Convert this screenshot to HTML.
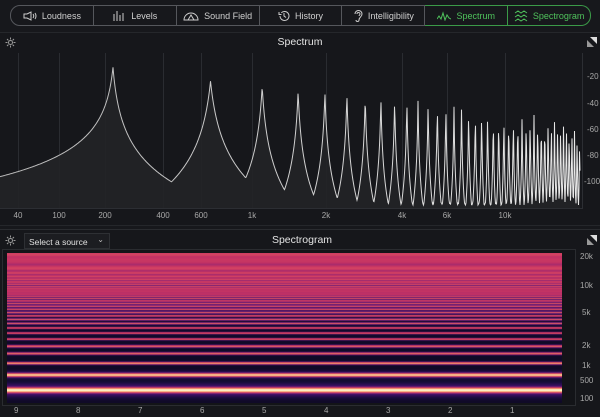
<!DOCTYPE html>
<html><head><meta charset="utf-8"><style>
*{margin:0;padding:0;box-sizing:border-box}
body{width:600px;height:417px;background:#17181c;overflow:hidden;font-family:"Liberation Sans",sans-serif;color:#d8d8d8;position:relative}
.tabs{position:absolute;left:10px;top:5px;width:581px;height:21px;display:flex}
.tab{flex:1;border:1px solid #55575c;border-left:none;display:flex;align-items:center;justify-content:center;font-size:9px;color:#d0d0d0;gap:5px}
.tab:first-child{border-left:1px solid #55575c;border-radius:10px 0 0 10px}
.tab.g{border-color:#3b9a48;color:#4fc25c}
.tab.g:last-child{border-radius:0 10px 10px 0}
svg{display:block}
.abs{position:absolute}
.lbl{position:absolute;font-size:8px;color:#a8a8a8}
</style></head><body>
<div class="tabs">
<div class="tab"><svg width="14" height="10" viewBox="0 0 14 10" fill="none" stroke="#ccc" stroke-width="1"><path d="M1 3h3l4-2v8L4 7H1z"/><path d="M10 3q1.5 2 0 4M12 2q2 3 0 6"/></svg>Loudness</div>
<div class="tab"><svg width="14" height="10" viewBox="0 0 14 10" stroke="#ccc" stroke-width="1"><path d="M2 3v7M5 0v10M8 4v6M11 2v8"/></svg>Levels</div>
<div class="tab"><svg width="16" height="10" viewBox="0 0 16 10" fill="none" stroke="#ccc" stroke-width="1"><path d="M1 9a7 7 0 0 1 14 0z"/><path d="M5 9l3-5 3 5"/></svg>Sound Field</div>
<div class="tab"><svg width="12" height="12" viewBox="0 0 12 12" fill="none" stroke="#ccc" stroke-width="1"><path d="M2 6a4.5 4.5 0 1 0 1.3-3.2"/><path d="M6 3v3l2 1.5"/><path d="M1 2v2.5h2.5" /></svg>History</div>
<div class="tab"><svg width="10" height="13" viewBox="0 0 10 13" fill="none" stroke="#ccc" stroke-width="1"><path d="M2 5a3.5 3.5 0 0 1 7 0c0 3-3 3-3 6a1.5 1.5 0 0 1-3 0"/><path d="M4 5a1.5 1.5 0 0 1 3 0c0 1-1 1.3-1 2"/></svg>Intelligibility</div>
<div class="tab g"><svg width="14" height="10" viewBox="0 0 14 10" fill="none" stroke="#4fc25c" stroke-width="1"><path d="M0 8l2-3 2 3 2-6 2 7 2-5 2 3 2 1"/></svg>Spectrum</div>
<div class="tab g"><svg width="14" height="12" viewBox="0 0 14 12" fill="none" stroke="#4fc25c" stroke-width="1"><path d="M1 3l3-2 3 2 3-2 3 2M1 7l3-2 3 2 3-2 3 2M1 11l3-2 3 2 3-2 3 2"/></svg>Spectrogram</div>
</div>

<div class="abs" style="left:0;top:32px;width:600px;height:194px;background:#16171b;border-top:1px solid #25272b;border-bottom:1px solid #25272b"></div>
<svg class="abs" style="left:5px;top:37px" width="11" height="11" viewBox="0 0 11 11" fill="none" stroke="#9a9a9a" stroke-width="1"><circle cx="5.5" cy="5.5" r="2"/><path d="M5.5 0.5v2M5.5 8.5v2M0.5 5.5h2M8.5 5.5h2M2 2l1.4 1.4M7.6 7.6L9 9M2 9l1.4-1.4M7.6 3.4L9 2"/></svg>
<div class="abs" style="left:0;width:600px;top:36px;text-align:center;font-size:10.5px;color:#e4e4e4">Spectrum</div>
<svg class="abs" style="left:587px;top:37px" width="10" height="10" viewBox="0 0 10 10"><path d="M3 0h7v7z" fill="#ddd"/><path d="M0 3v7h7z" fill="#999"/></svg>
<svg class="abs" id="sp" style="left:0;top:53px" width="582" height="156"></svg>
<div class="abs" style="left:0;top:208px;width:582px;height:1px;background:#2c2e33"></div>
<div class="abs" style="left:582px;top:53px;width:1px;height:156px;background:#2c2e33"></div>
<div class="lbl" style="left:587px;top:72px">-20</div>
<div class="lbl" style="left:587px;top:99px">-40</div>
<div class="lbl" style="left:587px;top:125px">-60</div>
<div class="lbl" style="left:587px;top:151px">-80</div>
<div class="lbl" style="left:584px;top:177px">-100</div>
<div id="xl"></div>

<div class="abs" style="left:0;top:229px;width:600px;height:188px;background:#16171b;border-top:1px solid #2a2c30"></div>
<svg class="abs" style="left:5px;top:235px" width="11" height="11" viewBox="0 0 11 11" fill="none" stroke="#9a9a9a" stroke-width="1"><circle cx="5.5" cy="5.5" r="2"/><path d="M5.5 0.5v2M5.5 8.5v2M0.5 5.5h2M8.5 5.5h2M2 2l1.4 1.4M7.6 7.6L9 9M2 9l1.4-1.4M7.6 3.4L9 2"/></svg>
<div class="abs" style="left:24px;top:233px;width:86px;height:16px;background:#1c1d21;border:1px solid #2e3034;font-size:8.5px;color:#e0e0e0;padding:3px 0 0 4px">Select a source<span style="position:absolute;right:5px;top:1px;font-size:8px;color:#bbb">&#8964;</span></div>
<div class="abs" style="left:0;width:604px;top:234px;text-align:center;font-size:10.5px;color:#e4e4e4">Spectrogram</div>
<svg class="abs" style="left:587px;top:235px" width="10" height="10" viewBox="0 0 10 10"><path d="M3 0h7v7z" fill="#ddd"/><path d="M0 3v7h7z" fill="#999"/></svg>
<div class="abs" style="left:2px;top:249px;width:574px;height:157px;border:1px solid #2a2c30;background:#131418"></div>
<canvas class="abs" id="sg" style="left:7px;top:253px" width="555" height="150"></canvas>
<div class="lbl" style="left:580px;top:252px">20k</div>
<div class="lbl" style="left:580px;top:281px">10k</div>
<div class="lbl" style="left:582px;top:308px">5k</div>
<div class="lbl" style="left:582px;top:341px">2k</div>
<div class="lbl" style="left:582px;top:361px">1k</div>
<div class="lbl" style="left:580px;top:376px">500</div>
<div class="lbl" style="left:580px;top:394px">100</div>
<div id="tl"></div>
<script>
(function(){
var fx=[[20,-20],[40,18],[100,59],[200,105],[400,163],[600,201],[1000,252],[2000,326],[4000,402],[6000,447],[10000,505],[20000,582],[24000,600]];
function interp(t,f){for(var i=0;i<t.length-1;i++){if(f<=t[i+1][0]){var a=t[i],b=t[i+1];var r=Math.log(f/a[0])/Math.log(b[0]/a[0]);return a[1]+r*(b[1]-a[1]);}}return t[t.length-1][1];}
var svgEl=document.getElementById('sp'),s='';
[40,100,200,400,600,1000,2000,4000,6000,10000].forEach(function(f){var x=Math.round(interp(fx,f))+0.5;s+='<line x1="'+x+'" y1="0" x2="'+x+'" y2="156" stroke="#2a2c31" stroke-width="1"/>';});
var xl='',names={40:'40',100:'100',200:'200',400:'400',600:'600',1000:'1k',2000:'2k',4000:'4k',6000:'6k',10000:'10k'};
for(var k in names){var x0=interp(fx,+k);xl+='<div class="lbl" style="left:'+(x0-8)+'px;width:16px;text-align:center;top:211px">'+names[k]+'</div>';}
document.getElementById('xl').innerHTML=xl;
var pk=[];for(var n=1;n*220<21000;n+=2){pk.push(interp(fx,n*220));}
function topY(x,i){if(i==0)return 67;if(i==1)return 81;if(i==2)return 86;if(i==3)return 91;if(x<540)return 92+(x-326)*0.09;if(x<570)return 111+(x-540)*0.3;return 120+(x-570)*1.2;}
var pts=[];
for(var x=0;x<=580;x+=0.5){var y=206;for(var i=0;i<pk.length;i++){var dx=x-pk[i];var spc=i==0?97:(pk[i]-pk[i-1]);var w=i==0?3:Math.max(0.25,spc*0.045);var c=(i==0&&dx<0)?30:(i==0?38:44);var yy=topY(pk[i],i)+c*Math.log(1+Math.abs(dx)/w);if(yy<y)y=yy;}
y=Math.min(y,204+Math.sin(x*3));pts.push([x,y-53]);}
var d='M0 156 ';pts.forEach(function(p){d+='L'+p[0].toFixed(1)+' '+p[1].toFixed(1)+' ';});
s+='<defs><linearGradient id="lg" x1="0" x2="1"><stop offset="0" stop-color="#b8b8b8"/><stop offset="1" stop-color="#e8e8e8"/></linearGradient></defs>';
s+='<path d="'+d+'L580 156Z" fill="#222327" opacity="0.9"/>';
var d2='M'+pts.map(function(p){return p[0].toFixed(1)+' '+p[1].toFixed(1)}).join(' L');
s+='<path d="'+d2+'" fill="none" stroke="url(#lg)" stroke-width="1"/>';
svgEl.innerHTML=s;
var tl='';for(var t=9;t>=1;t--){var tx=17+(9-t)*62;tl+='<div class="lbl" style="left:'+(tx-3)+'px;top:406px">'+t+'</div>';}
document.getElementById('tl').innerHTML=tl;
var fy=[[50,405],[100,399],[500,381],[1000,366],[2000,346],[5000,313],[10000,286],[20000,257],[24000,250]];
function yf(f){return interp(fy,f)-253;}
var mag=[[0,[10,8,26]],[0.15,[25,12,60]],[0.3,[70,15,110]],[0.45,[130,35,120]],[0.6,[195,50,100]],[0.72,[230,85,95]],[0.82,[250,140,100]],[0.92,[253,210,150]],[1,[252,253,210]]];
function cm(v){v=Math.max(0,Math.min(1,v));for(var i=0;i<mag.length-1;i++){if(v<=mag[i+1][0]){var a=mag[i],b=mag[i+1],r=(v-a[0])/(b[0]-a[0]);return [0,1,2].map(function(j){return Math.round(a[1][j]+r*(b[1][j]-a[1][j]))});}}return mag[mag.length-1][1];}
var cv=document.getElementById('sg'),ctx=cv.getContext('2d');
var H=[];for(var m=1;m*220<22000;m+=2){var ii=(m-1)/2;var a=ii==0?1:ii==1?0.93:ii==2?0.86:Math.max(0.66,0.78-ii*0.004);var sg=ii==0?2.6:ii==1?1.8:ii<5?1.1:0.85;H.push([yf(m*220),a,sg,ii]);}
for(var yy2=0;yy2<150;yy2++){var v=0.06;for(var j=0;j<H.length;j++){var dy=yy2+0.5-H[j][0];var e=H[j][1]*Math.exp(-dy*dy/(2*H[j][2]*H[j][2]));if(H[j][3]==0){e=Math.max(e,0.35*Math.exp(-dy*dy/72));}if(H[j][3]==1){e=Math.max(e,0.3*Math.exp(-dy*dy/24));}v=Math.max(v,e);}
if(yy2<55)v=Math.max(v,0.45-yy2*0.003);
var col=cm(v);ctx.fillStyle='rgb('+col.join(',')+')';ctx.fillRect(0,yy2,555,1);}
})();
</script>
</body></html>
